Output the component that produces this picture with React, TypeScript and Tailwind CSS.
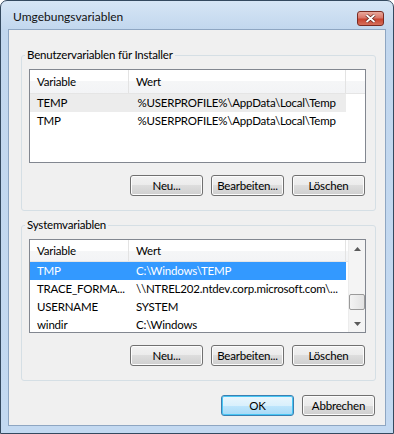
import clsx from "clsx";

type Row = { name: string; value: string; state?: "hover" | "selected" };

const userRows: Row[] = [
  { name: "TEMP", value: "%USERPROFILE%\\AppData\\Local\\Temp", state: "hover" },
  { name: "TMP", value: "%USERPROFILE%\\AppData\\Local\\Temp" },
];

const systemRows: Row[] = [
  { name: "TMP", value: "C:\\Windows\\TEMP", state: "selected" },
  { name: "TRACE_FORMA...", value: "\\\\NTREL202.ntdev.corp.microsoft.com\\..." },
  { name: "USERNAME", value: "SYSTEM" },
  { name: "windir", value: "C:\\Windows" },
];

function Btn({ label, primary }: { label: string; primary?: boolean }) {
  return (
    <button
      className={clsx(
        "w-[73px] h-[21px] rounded-[3px] border leading-none text-black",
        primary
          ? "border-[#3c7fb1] bg-[linear-gradient(to_bottom,#eaf6fd_0%,#d9f0fc_50%,#bee6fd_50%,#a7d9f5_100%)] shadow-[inset_0_0_0_1px_#48c6f4]"
          : "border-[#707070] bg-[linear-gradient(to_bottom,#f2f2f2_0%,#ebebeb_50%,#dddddd_50%,#cfcfcf_100%)] shadow-[inset_0_0_0_1px_#fcfcfc]"
      )}
    >
      {label}
    </button>
  );
}

function ScrollBar() {
  return (
    <div className="w-[17px] flex flex-col bg-[#f4f4f4] border-l border-[#ececec]">
      <div className="h-[17px] flex items-center justify-center">
        <svg width="7" height="4" viewBox="0 0 7 4">
          <path d="M0 4 L3.5 0 L7 4 Z" fill="#5a5a5a" />
        </svg>
      </div>
      <div className="flex-1 flex flex-col">
        <div className="h-[37px]" />
        <div className="h-[16px] rounded-[2px] border border-[#9a9a9a] bg-[linear-gradient(to_right,#f3f3f3,#e2e2e2)]" />
      </div>
      <div className="h-[17px] flex items-center justify-center">
        <svg width="7" height="4" viewBox="0 0 7 4">
          <path d="M0 0 L3.5 4 L7 0 Z" fill="#5a5a5a" />
        </svg>
      </div>
    </div>
  );
}

function ListView({
  rows,
  headerH,
  scroll,
  inset,
}: {
  rows: Row[];
  headerH: string;
  scroll?: boolean;
  inset: string;
}) {
  return (
    <div className="h-[94px] border border-[#828790] bg-white flex overflow-hidden">
      <div className="flex-1 flex flex-col min-w-0">
        <div
          className={clsx(
            headerH,
            "flex shrink-0 border-b border-[#e5e5e5] bg-[linear-gradient(to_bottom,#ffffff_0%,#ffffff_50%,#f5f6f7_50%,#f3f4f6_100%)]"
          )}
        >
          <div className="w-[99px] border-r border-[#e3e3e3] pl-[7px] flex items-center">Variable</div>
          <div className="w-[217px] border-r border-[#e3e3e3] pl-[7px] flex items-center">Wert</div>
          <div className="flex-1" />
        </div>
        {rows.map((r) => (
          <div
            key={r.name}
            className={clsx(
              "h-[18px] flex items-center w-[316px] shrink-0",
              r.state === "hover" && "bg-[#ececec]",
              r.state === "selected" && "bg-[#3399ff] text-white"
            )}
          >
            <div className={clsx("w-[99px] whitespace-nowrap overflow-hidden", inset)}>{r.name}</div>
            <div className="w-[217px] pl-[7px] whitespace-nowrap overflow-hidden">{r.value}</div>
          </div>
        ))}
      </div>
      {scroll && <ScrollBar />}
    </div>
  );
}

function Group({ title, children }: { title: string; children: React.ReactNode }) {
  return (
    <fieldset className="border border-[#d5dfe5] rounded-[3px] pl-[7px] pr-[9px] pt-[6px] pb-[14px]">
      <legend className="ml-[-4px] px-[2px] h-[16px] leading-[16px]">{title}</legend>
      {children}
    </fieldset>
  );
}

export default function App() {
  return (
    <div className="w-[394px] h-[434px] flex flex-col rounded-t-[7px] border border-[#34495f] bg-[linear-gradient(to_bottom,#d6e5f5_0px,#c2d7ee_28px,#c3d9f1_100%)] text-[11.5px] tracking-[-0.2px] text-black font-['Lato',sans-serif]">
      <div className="h-[28px] flex items-center justify-between pl-[12px] pr-[9px] pt-[4px]">
        <span className="text-[12px] tracking-normal text-[#111]">Umgebungsvariablen</span>
        <div className="w-[27px] h-[15px] mt-[2px] rounded-[3px] border border-[#7a2b22] bg-[linear-gradient(to_bottom,#e9a99c_0%,#d9776a_45%,#c8432f_55%,#d5705c_100%)] flex items-center justify-center">
          <svg width="11" height="9" viewBox="0 0 11 9">
            <path d="M1.5 1 L9.5 8 M9.5 1 L1.5 8" stroke="#5d2019" strokeWidth="3.2" />
            <path d="M1.5 1 L9.5 8 M9.5 1 L1.5 8" stroke="#ffffff" strokeWidth="1.8" />
          </svg>
        </div>
      </div>
      <div className="flex-1 mx-[7px] mb-[7px] border border-[#8ea6c2] bg-[#f0f0f0] flex flex-col pl-[12px] pr-[9px] pt-[17px]">
        <Group title="Benutzervariablen für Installer">
          <ListView rows={userRows} headerH="h-[24px]" inset="pl-[5px] ml-[2px]" />
          <div className="flex justify-end gap-[8px] pr-[1px] mt-[12px]">
            <Btn label="Neu..." />
            <Btn label="Bearbeiten..." />
            <Btn label="Löschen" />
          </div>
        </Group>
        <div className="h-[6px]" />
        <Group title="Systemvariablen">
          <ListView rows={systemRows} headerH="h-[22px]" scroll inset="pl-[7px]" />
          <div className="flex justify-end gap-[8px] pr-[1px] mt-[12px]">
            <Btn label="Neu..." />
            <Btn label="Bearbeiten..." />
            <Btn label="Löschen" />
          </div>
        </Group>
        <div className="flex justify-end gap-[8px] mt-[14px] pr-[1px]">
          <Btn label="OK" primary />
          <Btn label="Abbrechen" />
        </div>
      </div>
    </div>
  );
}
